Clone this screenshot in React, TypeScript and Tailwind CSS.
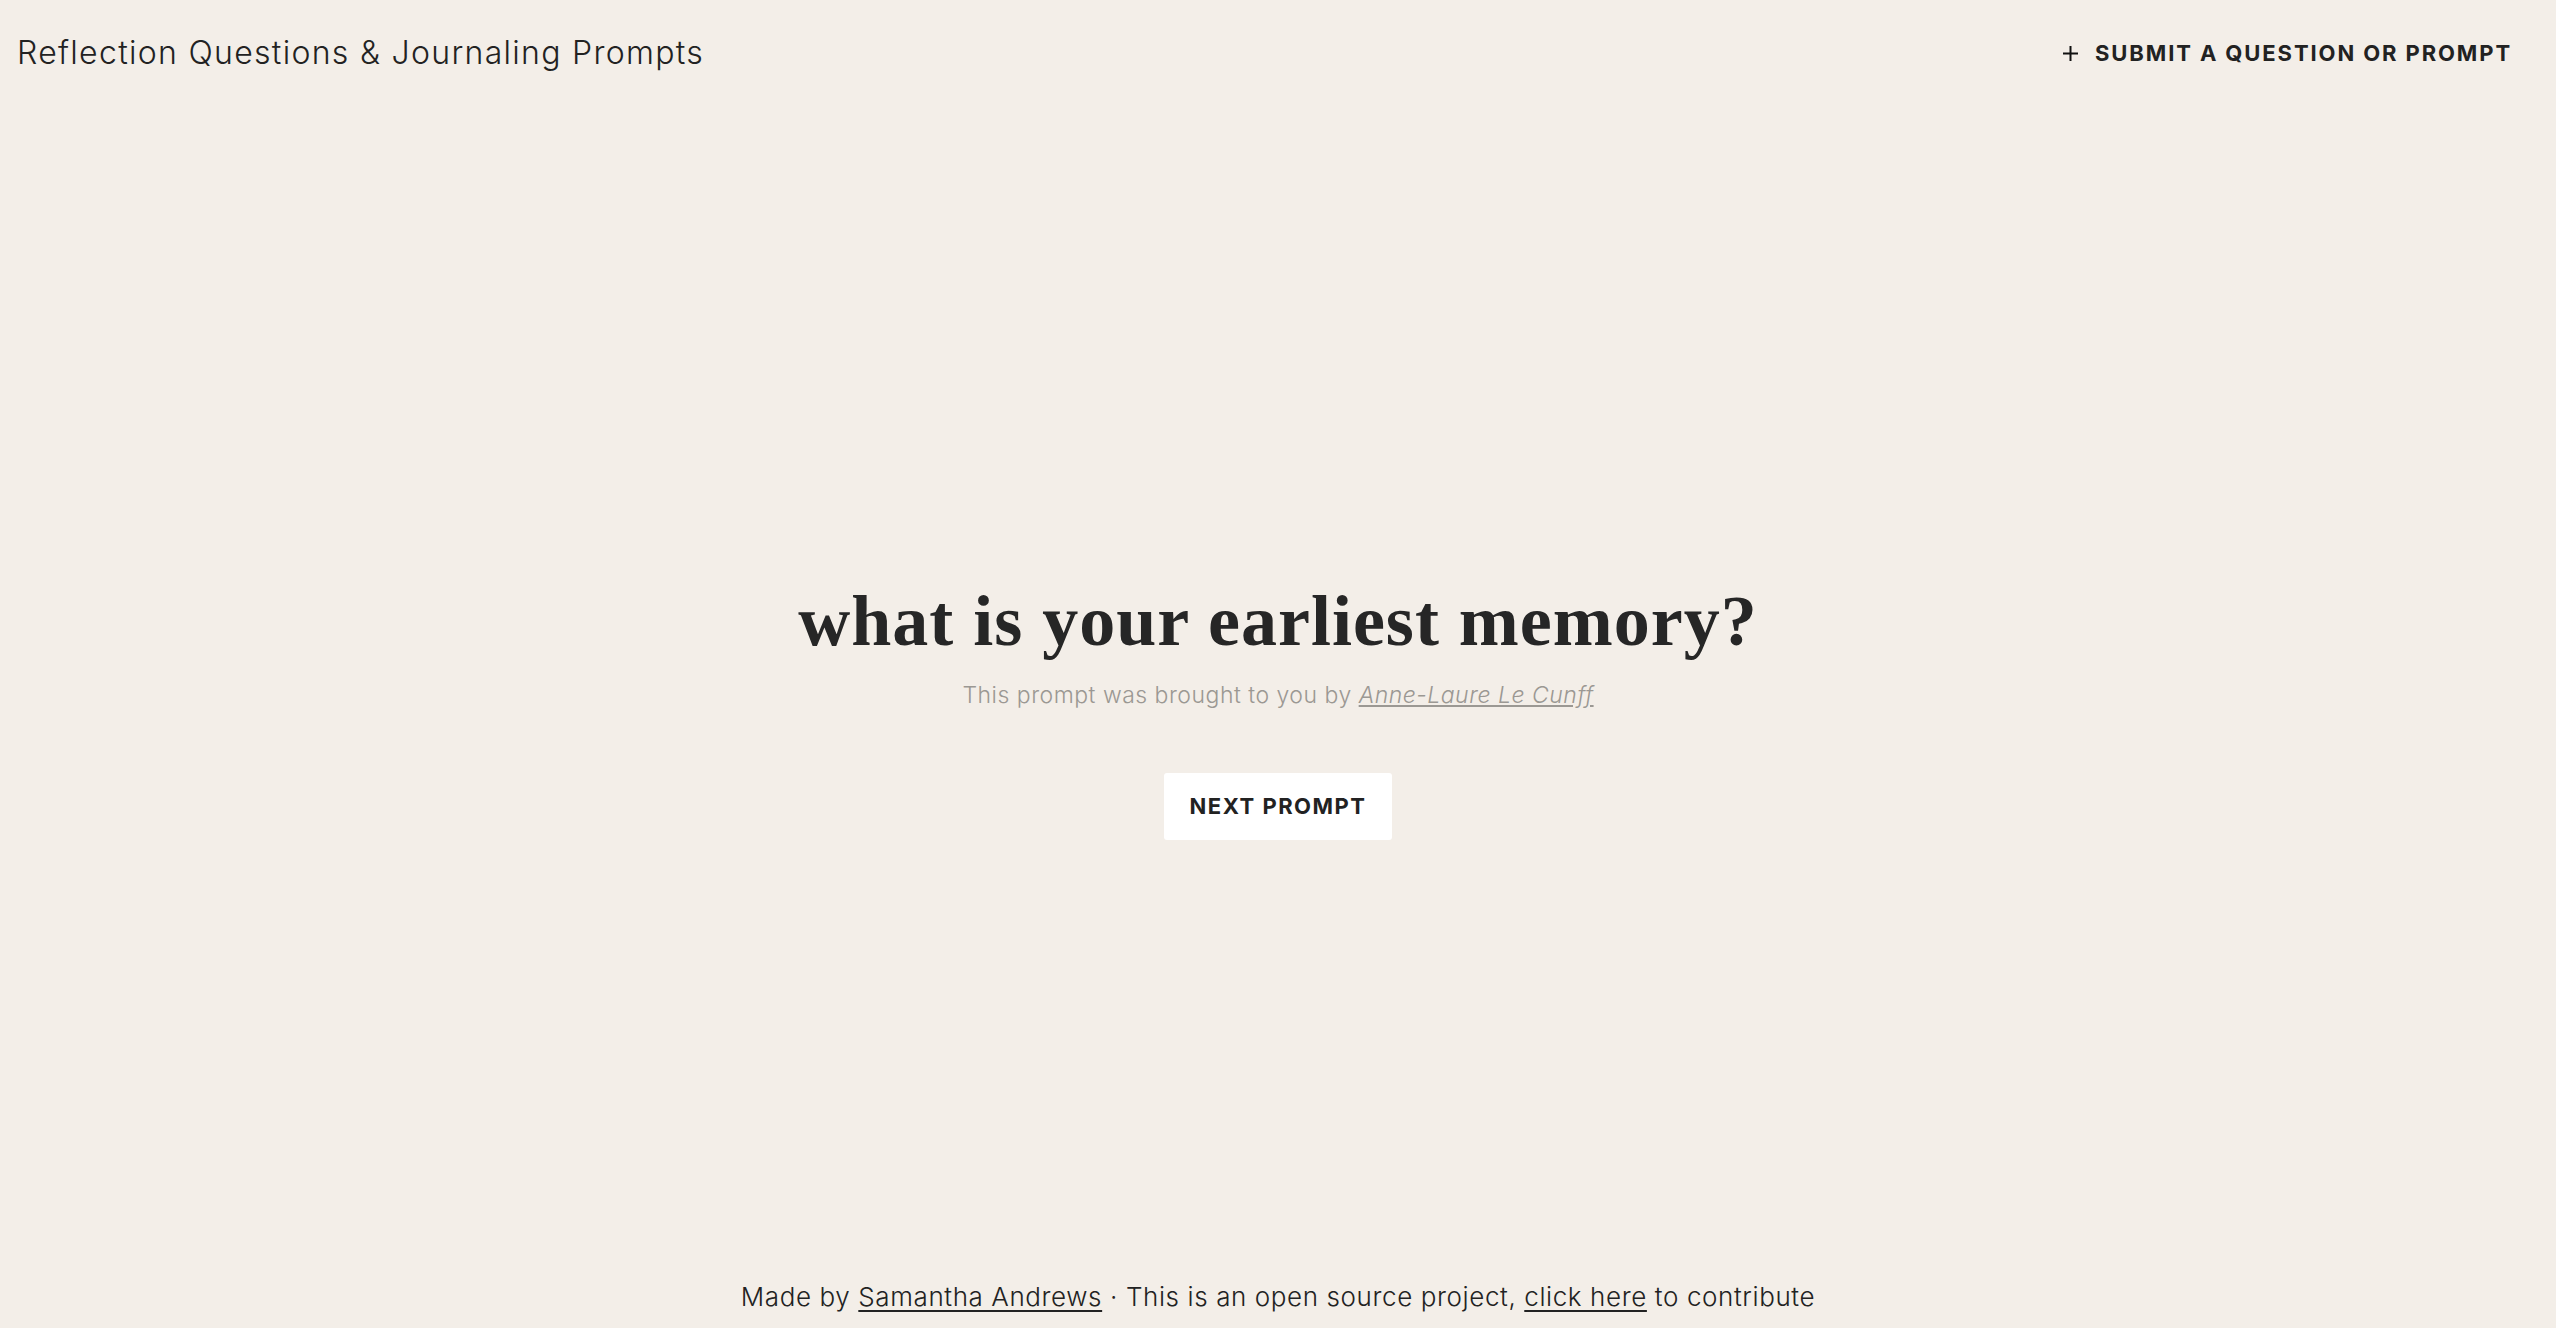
import React from "react";

const sans = { fontFamily: "Inter, 'Open Sans', sans-serif" };

export default function App() {
  return (
    <div
      className="min-h-screen w-full flex flex-col bg-[#f3eee8] text-[#222222]"
      style={sans}
    >
      {/* header */}
      <header className="h-[106px] flex items-center justify-between pl-[17px] pr-[44px]">
        <h1 className="text-[32px] font-light tracking-[1.3px]">
          Reflection Questions &amp; Journaling Prompts
        </h1>
        <button className="flex items-center gap-[17px] text-[22px] font-bold tracking-[1.9px] uppercase text-[#222222]">
          <svg width="15" height="15" viewBox="0 0 15 15" className="shrink-0">
            <path d="M7.5 0v15M0 7.5h15" stroke="#111" strokeWidth="2" />
          </svg>
          Submit a question or prompt
        </button>
      </header>

      {/* prompt */}
      <main className="flex-1 flex flex-col items-center justify-center pt-[48px]">
        <h2
          className="text-[72px] font-bold leading-[1.2] tracking-[1px] text-[#262626]"
          style={{ fontFamily: "'Liberation Serif', 'DejaVu Serif', serif" }}
        >
          what is your earliest memory?
        </h2>
        <p className="mt-[14px] text-[23px] font-light tracking-[0.5px] text-[#9b9893]">
          This prompt was brought to you by{" "}
          <a href="#" className="italic underline underline-offset-2">
            Anne-Laure Le Cunff
          </a>
        </p>
        <button className="mt-[60px] w-[228px] h-[67px] rounded-[3px] bg-white text-[22px] font-bold tracking-[1.5px] text-[#222222]">
          NEXT PROMPT
        </button>
      </main>

      {/* footer */}
      <footer className="h-[64px] flex items-center justify-center text-[26px] font-light tracking-[0.6px]">
        <span>
          Made by{" "}
          <a href="#" className="underline underline-offset-4">
            Samantha Andrews
          </a>{" "}
          · This is an open source project,{" "}
          <a href="#" className="underline underline-offset-4">
            click here
          </a>{" "}
          to contribute
        </span>
      </footer>
    </div>
  );
}
